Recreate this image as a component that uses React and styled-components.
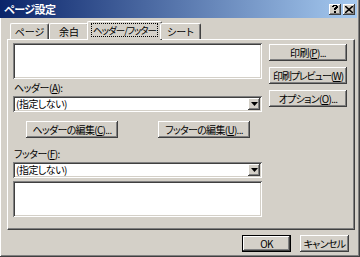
import React from "react";
import styled, { createGlobalStyle, css } from "styled-components";

const GlobalStyle = createGlobalStyle`
  html, body {
    margin: 0;
    padding: 0;
    background: #d4d0c8;
  }
  body {
    font-family: "Noto Sans CJK JP", "Noto Sans", sans-serif;
    font-size: 10px;
    font-feature-settings: "palt";
    color: #000;
  }
`;

const raised = css`
  box-shadow: inset -1px -1px #404040, inset 1px 1px #ffffff,
    inset -2px -2px #808080, inset 2px 2px #d4d0c8;
`;

const sunken = css`
  box-shadow: inset 1px 1px #808080, inset -1px -1px #ffffff,
    inset 2px 2px #404040, inset -2px -2px #d4d0c8;
`;

const Window = styled.div`
  width: 360px;
  height: 257px;
  box-sizing: border-box;
  background: #d4d0c8;
  padding: 0 3px 3px 2px;
  box-shadow: inset -1px -1px #404040, inset 1px 0 #ffffff, inset -2px -2px #808080;
  display: flex;
  flex-direction: column;
  overflow: hidden;
`;

const TitleBar = styled.div`
  height: 18px;
  margin-left: -2px;
  background: linear-gradient(to right, #0a246a, #a6caf0);
  display: flex;
  align-items: center;
  padding: 0 2px 0 4px;
  color: #fff;
  font-weight: bold;
  font-size: 11px;
  letter-spacing: -0.5px;
`;

const Title = styled.span`
  flex: 1;
  line-height: 18px;
`;

const CapButton = styled.div`
  width: 12px;
  height: 11px;
  margin-left: 2px;
  background: #d4d0c8;
  ${raised};
  display: flex;
  align-items: center;
  justify-content: center;
  color: #000;
`;

const Body = styled.div`
  padding: 3px 2px 0 5px;
  display: flex;
  flex-direction: column;
`;

const TabRow = styled.div`
  display: flex;
  align-items: flex-end;
  height: 18px;
  padding-left: 3px;
  position: relative;
  z-index: 1;
`;

const Tab = styled.div`
  height: ${(p) => (p.$active ? 19 : 16)}px;
  width: ${(p) => p.$w}px;
  box-sizing: border-box;
  margin: 0 ${(p) => (p.$active ? -2 : 0)}px ${(p) => (p.$active ? -1 : 0)}px;
  background: #d4d0c8;
  border-top: 1px solid #fff;
  border-left: 1px solid #fff;
  border-right: 1px solid #404040;
  border-radius: 2px 2px 0 0;
  box-shadow: inset -1px 0 #808080;
  display: flex;
  align-items: center;
  justify-content: center;
  white-space: nowrap;
  padding-bottom: ${(p) => (p.$active ? 2 : 0)}px;
`;

const Focus = styled.span`
  outline: 1px dotted #000;
  padding: 0 1px;
  font-size: 9.5px;
  line-height: 12px;
  letter-spacing: -1px;
`;

const Panel = styled.div`
  height: 191px;
  box-sizing: border-box;
  border-top: 1px solid #fff;
  border-left: 1px solid #fff;
  border-right: 1px solid #404040;
  border-bottom: 1px solid #404040;
  box-shadow: inset -1px -1px #808080;
  display: flex;
  gap: 7px;
  padding: 3px 0 0 5px;
`;

const LeftCol = styled.div`
  width: 249px;
  display: flex;
  flex-direction: column;
`;

const RightCol = styled.div`
  width: 78px;
  display: flex;
  flex-direction: column;
  gap: 6px;
  padding-top: 1px;
`;

const Preview = styled.div`
  height: 36px;
  background: #fff;
  ${sunken};
`;

const Label = styled.div`
  height: 14px;
  line-height: 14px;
  margin-top: ${(p) => p.$top}px;
  padding-left: 1px;
  letter-spacing: -0.5px;
`;

const Combo = styled.div`
  height: 16px;
  margin: 1px 0 3px;
  background: #fff;
  ${sunken};
  display: flex;
  align-items: center;
  padding: 0 2px 0 3px;
`;

const ComboText = styled.span`
  flex: 1;
  line-height: 12px;
  letter-spacing: -0.5px;
`;

const Arrow = styled.div`
  width: 12px;
  height: 12px;
  background: #d4d0c8;
  ${raised};
  display: flex;
  align-items: center;
  justify-content: center;
`;

const ButtonRow = styled.div`
  display: flex;
  justify-content: space-between;
  padding: 6px 12px 0 13px;
  margin-bottom: 8px;
`;

const Button = styled.div`
  width: ${(p) => p.$w || 78}px;
  height: 17px;
  box-sizing: border-box;
  background: #d4d0c8;
  ${raised};
  ${(p) =>
    p.$default &&
    css`
      border: 1px solid #000;
    `}
  display: flex;
  align-items: center;
  justify-content: center;
  white-space: nowrap;
  letter-spacing: ${(p) => (p.$tight ? -1.1 : -0.7)}px;
`;

const Footer = styled.div`
  display: flex;
  justify-content: flex-end;
  gap: 9px;
  padding: 5px 6px 0 0;
`;

const DownArrow = () => (
  <svg width="7" height="4" viewBox="0 0 7 4">
    <path d="M0 0h7L3.5 4z" fill="#000" />
  </svg>
);

export default function App() {
  return (
    <>
      <GlobalStyle />
      <Window>
        <TitleBar>
          <Title>ページ設定</Title>
          <CapButton>
            <svg width="6" height="8" viewBox="0 0 6 8">
              <path d="M0 1h1V0h4v1h1v2H5v1H4v1H2V3h1V2h1V1H2v1H0z M2 6h2v2H2z" fill="#000" />
            </svg>
          </CapButton>
          <CapButton>
            <svg width="8" height="7" viewBox="0 0 8 7">
              <path d="M0 0l8 7M8 0L0 7" stroke="#000" strokeWidth="1.6" />
            </svg>
          </CapButton>
        </TitleBar>
        <Body>
          <TabRow>
            <Tab $w={39}>ページ</Tab>
            <Tab $w={40}>余白</Tab>
            <Tab $w={75} $active>
              <Focus>ヘッダー/フッター</Focus>
            </Tab>
            <Tab $w={41}>シート</Tab>
          </TabRow>
          <Panel>
            <LeftCol>
              <Preview />
              <Label $top={2}>
                ヘッダー(<u>A</u>):
              </Label>
              <Combo>
                <ComboText>(指定しない)</ComboText>
                <Arrow>
                  <DownArrow />
                </Arrow>
              </Combo>
              <ButtonRow>
                <Button $w={92}>
                  ヘッダーの編集(<u>C</u>)...
                </Button>
                <Button $w={92}>
                  フッターの編集(<u>U</u>)...
                </Button>
              </ButtonRow>
              <Label $top={1}>
                フッター(<u>F</u>):
              </Label>
              <Combo>
                <ComboText>(指定しない)</ComboText>
                <Arrow>
                  <DownArrow />
                </Arrow>
              </Combo>
              <Preview />
            </LeftCol>
            <RightCol>
              <Button>
                印刷(<u>P</u>)...
              </Button>
              <Button $tight>
                印刷プレビュー(<u>W</u>)
              </Button>
              <Button>
                オプション(<u>O</u>)...
              </Button>
            </RightCol>
          </Panel>
          <Footer>
            <Button $w={49} $default>
              OK
            </Button>
            <Button $w={49}>キャンセル</Button>
          </Footer>
        </Body>
      </Window>
    </>
  );
}
